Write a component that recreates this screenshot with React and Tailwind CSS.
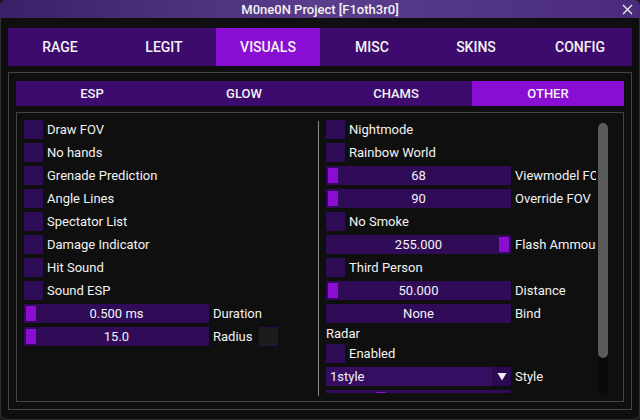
import React from "react";

const tabs = ["RAGE", "LEGIT", "VISUALS", "MISC", "SKINS", "CONFIG"];
const subTabs = ["ESP", "GLOW", "CHAMS", "OTHER"];

const leftChecks = [
  "Draw FOV",
  "No hands",
  "Grenade Prediction",
  "Angle Lines",
  "Spectator List",
  "Damage Indicator",
  "Hit Sound",
  "Sound ESP",
];

function Check({ label }) {
  return (
    <div className="flex items-center h-[19px] gap-[4px] shrink-0">
      <div className="w-[19px] h-[19px] bg-[#2f0d56] shrink-0" />
      <span className="whitespace-nowrap leading-none">{label}</span>
    </div>
  );
}

function Slider({ value, label, pos = 0, children }) {
  return (
    <div className="flex items-center h-[19px] gap-[4px] shrink-0">
      <div className="relative w-[185px] h-[19px] bg-[#300c58] shrink-0 flex items-center justify-center">
        <div
          className="absolute top-[2px] w-[10px] h-[15px] bg-[#8c0dd2]"
          style={{ left: 2 + pos * 171 }}
        />
        <span className="relative leading-none">{value}</span>
      </div>
      <span className="whitespace-nowrap leading-none">{label}</span>
      {children}
    </div>
  );
}

export default function App() {
  return (
    <div className="w-[640px] h-[420px] bg-[#1b1b1b]">
      <div
        className="w-[640px] h-[420px] bg-[#0f0f0f] rounded-[6px] overflow-hidden flex flex-col shadow-[inset_0_0_0_1px_#2e2e2e] text-[#f2f2f2] text-[13px]"
        style={{ fontFamily: "Roboto, 'Liberation Sans', sans-serif" }}
      >
        {/* title bar */}
        <div className="relative h-[18px] shrink-0 bg-gradient-to-r from-[#3a2068] via-[#5a3d8c] to-[#4a2b7c] flex items-center justify-center">
          <span className="leading-none font-medium">M0ne0N Project [F1oth3r0]</span>
          <svg
            className="absolute right-[7px] top-[4px]"
            width="11"
            height="11"
            viewBox="0 0 11 11"
          >
            <path d="M1 1L10 10M10 1L1 10" stroke="#f0f0f0" strokeWidth="1.3" />
          </svg>
        </div>

        <div className="flex flex-col px-[8px] pt-[10px]">
          {/* main tabs */}
          <div className="flex h-[38px] bg-[#3c0b6d]">
            {tabs.map((t) => (
              <div
                key={t}
                className={
                  "flex-1 flex items-center justify-center font-medium text-[14px] " +
                  (t === "VISUALS" ? "bg-[#8a0dd4]" : "")
                }
              >
                {t}
              </div>
            ))}
          </div>

          {/* panel */}
          <div className="mt-[6px] h-[338px] border border-[#454545] px-[7px] pt-[8px] pb-[7px] flex flex-col">
            <div className="flex h-[25px] bg-[#3c0b6d] shrink-0">
              {subTabs.map((t) => (
                <div
                  key={t}
                  className={
                    "flex-1 flex items-center justify-center font-medium text-[13px] " +
                    (t === "OTHER" ? "bg-[#8a0dd4]" : "")
                  }
                >
                  {t}
                </div>
              ))}
            </div>

            <div className="mt-[6px] flex-1 border border-[#454545] flex pl-[7px] pt-[7px] pb-[4px]">
              {/* left column */}
              <div className="w-[294px] flex flex-col gap-[4px] shrink-0">
                {leftChecks.map((c) => (
                  <Check key={c} label={c} />
                ))}
                <Slider value="0.500 ms" label="Duration" />
                <Slider value="15.0" label="Radius">
                  <div className="ml-[3px] w-[19px] h-[19px] bg-[#1c1c1c] border border-[#2c0b4c]" />
                </Slider>
              </div>

              {/* divider */}
              <div className="w-px bg-[#8a8a8a] mt-[1px] mb-[1px] shrink-0" />

              {/* right column */}
              <div className="flex-1 flex pl-[7px] pr-[15px]">
                <div className="w-[270px] overflow-hidden flex flex-col gap-[4px] h-[273px]">
                  <Check label="Nightmode" />
                  <Check label="Rainbow World" />
                  <Slider value="68" label="Viewmodel FOV" />
                  <Slider value="90" label="Override FOV" />
                  <Check label="No Smoke" />
                  <Slider value="255.000" label="Flash Ammount" pos={1} />
                  <Check label="Third Person" />
                  <Slider value="50.000" label="Distance" />
                  <div className="flex items-center h-[19px] gap-[4px] shrink-0">
                    <div className="w-[185px] h-[19px] bg-[#300c58] flex items-center justify-center leading-none">
                      None
                    </div>
                    <span className="leading-none">Bind</span>
                  </div>
                  <div className="h-[13px] leading-[13px] shrink-0">Radar</div>
                  <Check label="Enabled" />
                  <div className="flex items-center h-[19px] gap-[4px] shrink-0">
                    <div className="w-[185px] h-[19px] bg-[#350e62] flex items-center">
                      <span className="flex-1 pl-[4px] leading-none">1style</span>
                      <div className="w-[19px] h-[19px] bg-[#2b0952] flex items-center justify-center">
                        <svg width="10" height="9" viewBox="0 0 10 9">
                          <path d="M0.5 1H9.5L5 8.5Z" fill="#f2f2f2" />
                        </svg>
                      </div>
                    </div>
                    <span className="leading-none">Style</span>
                  </div>
                  <Slider value="" label="" pos={0.28} />
                </div>
                {/* scrollbar */}
                <div className="ml-[2px] w-[10px] h-[270px] mt-[3px] bg-[#0a0a0a] shrink-0">
                  <div className="w-[10px] h-[235px] rounded-full bg-[#5a5a5a]" />
                </div>
              </div>
            </div>
          </div>
        </div>
      </div>
    </div>
  );
}
